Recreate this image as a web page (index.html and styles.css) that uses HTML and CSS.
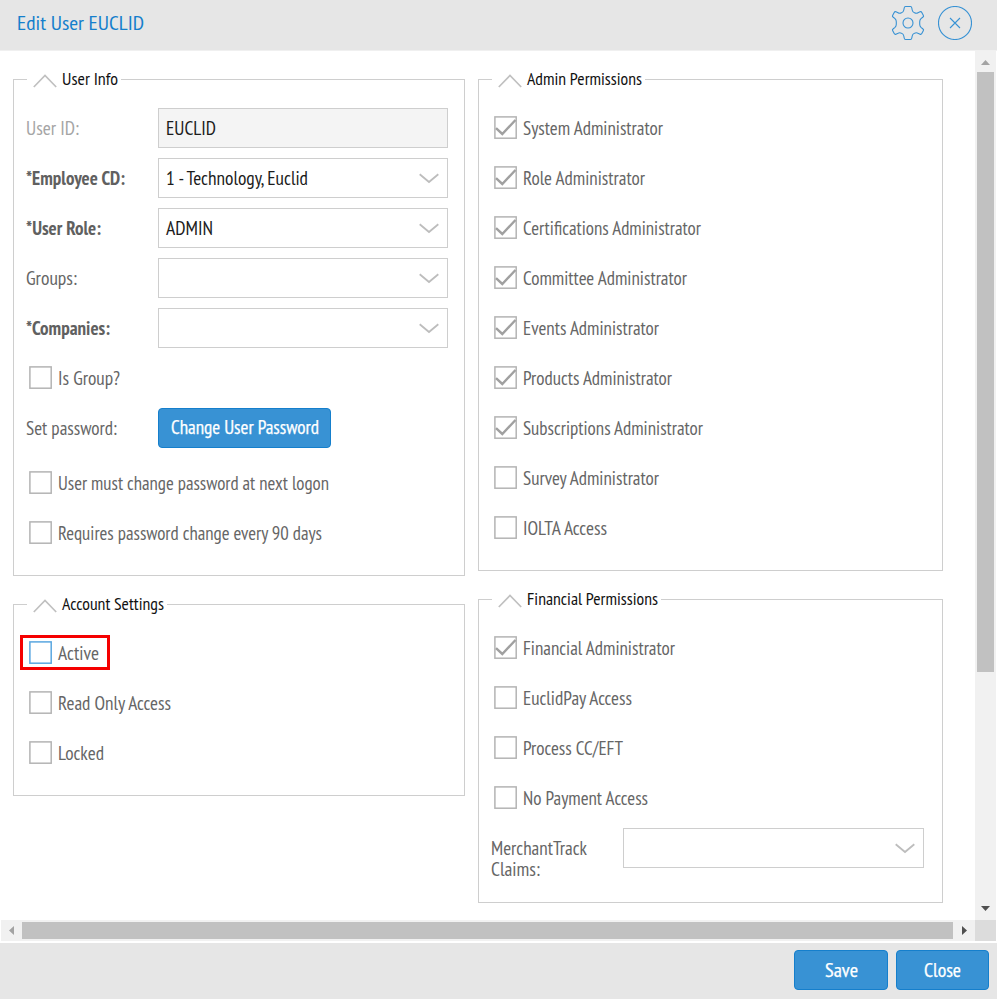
FILE: index.html
```
<!DOCTYPE html>
<html lang="en">
<head>
<meta charset="utf-8">
<title>Edit User EUCLID</title>
<link rel="stylesheet" href="styles.css">
</head>
<body>
<svg class="defs" width="0" height="0">
  <symbol id="box" viewBox="0 0 23 23"><rect x=".9" y=".9" width="21.3" height="21.3"/></symbol>
  <symbol id="checked" viewBox="0 0 23 23"><rect x=".9" y=".9" width="21.3" height="21.3"/><path class="tick" d="M2 12.2L8.3 18L21.5 4"/></symbol>
  <symbol id="up" viewBox="0 0 24 14"><path d="M.8 13L12 1.5L23.2 13"/></symbol>
  <symbol id="down" viewBox="0 0 20 11"><path d="M.7 1.3L10 9L19.3 1.3"/></symbol>
</svg>
<div class="dialog">
  <header class="titlebar">
    <svg class="t title" width="127" height="26"><text y="20" textLength="127" lengthAdjust="spacingAndGlyphs">Edit User EUCLID</text></svg>
    <svg class="tool" width="34" height="36" viewBox="-17 -18 34 36"><path d="M-2.5-16.5H2.5Q3.6-16.5 3.8-15L4.2-13Q4.5-11 6.5-10.3Q8.3-9.3 10-10.3L12-11.2Q13.2-11.7 13.8-10.6L15.4-7.6Q15.9-6.7 15-6L13-4.3Q11.7-3 11.7-1.2V1.2Q11.7 3 13 4.3L15 6Q15.9 6.7 15.4 7.6L13.8 10.6Q13.2 11.7 12 11.2L10 10.3Q8.3 9.3 6.5 10.3Q4.5 11 4.2 13L3.8 15Q3.6 16.5 2.5 16.5H-2.5Q-3.6 16.5-3.8 15L-4.2 13Q-4.5 11-6.5 10.3Q-8.3 9.3-10 10.3L-12 11.2Q-13.2 11.7-13.8 10.6L-15.4 7.6Q-15.9 6.7-15 6L-13 4.3Q-11.7 3-11.7 1.2V-1.2Q-11.7-3-13-4.3L-15-6Q-15.9-6.7-15.4-7.6L-13.8-10.6Q-13.2-11.7-12-11.2L-10-10.3Q-8.3-9.3-6.5-10.3Q-4.5-11-4.2-13L-3.8-15Q-3.6-16.5-2.5-16.5Z"/><circle r="5"/></svg>
    <svg class="tool" width="34" height="34" viewBox="-17 -17 34 34"><circle r="16.5"/><path d="M-5-5L5 5M5-5L-5 5"/></svg>
  </header>
  <div class="viewport">
    <main class="content">
      <div class="column left">
        <fieldset>
          <legend><svg class="chev" width="24" height="14"><use href="#up"/></svg><svg class="t legend" width="56" height="25"><text y="18" textLength="56" lengthAdjust="spacingAndGlyphs">User Info</text></svg></legend>
          <div class="row"><span class="label off"><svg class="t" width="53" height="24"><text y="19" textLength="53" lengthAdjust="spacingAndGlyphs">User ID:</text></svg></span><div class="input disabled"><svg class="t" width="50" height="24"><text y="19" textLength="50" lengthAdjust="spacingAndGlyphs">EUCLID</text></svg></div></div>
          <div class="row"><span class="label bold"><svg class="t" width="99" height="24"><text y="19" textLength="99" lengthAdjust="spacingAndGlyphs">*Employee CD:</text></svg></span><div class="input"><svg class="t" width="142" height="24"><text y="19" textLength="142" lengthAdjust="spacingAndGlyphs">1 - Technology, Euclid</text></svg><svg class="arrow" width="20" height="11"><use href="#down"/></svg></div></div>
          <div class="row"><span class="label bold"><svg class="t" width="75" height="24"><text y="19" textLength="75" lengthAdjust="spacingAndGlyphs">*User Role:</text></svg></span><div class="input"><svg class="t" width="47" height="24"><text y="19" textLength="47" lengthAdjust="spacingAndGlyphs">ADMIN</text></svg><svg class="arrow" width="20" height="11"><use href="#down"/></svg></div></div>
          <div class="row"><span class="label"><svg class="t" width="51" height="24"><text y="19" textLength="51" lengthAdjust="spacingAndGlyphs">Groups:</text></svg></span><div class="input"><svg class="arrow" width="20" height="11"><use href="#down"/></svg></div></div>
          <div class="row"><span class="label bold"><svg class="t" width="84" height="24"><text y="19" textLength="84" lengthAdjust="spacingAndGlyphs">*Companies:</text></svg></span><div class="input"><svg class="arrow" width="20" height="11"><use href="#down"/></svg></div></div>
          <div class="row check"><svg class="cb" width="23" height="23"><use href="#box"/></svg><svg class="t" width="62" height="24"><text y="19" textLength="62" lengthAdjust="spacingAndGlyphs">Is Group?</text></svg></div>
          <div class="row"><span class="label"><svg class="t" width="91" height="24"><text y="19" textLength="91" lengthAdjust="spacingAndGlyphs">Set password:</text></svg></span><button class="btn change"><svg class="t" width="148" height="24"><text y="18" textLength="148" lengthAdjust="spacingAndGlyphs">Change User Password</text></svg></button></div>
          <div class="row check spaced"><svg class="cb" width="23" height="23"><use href="#box"/></svg><svg class="t" width="271" height="24"><text y="19" textLength="271" lengthAdjust="spacingAndGlyphs">User must change password at next logon</text></svg></div>
          <div class="row check"><svg class="cb" width="23" height="23"><use href="#box"/></svg><svg class="t" width="264" height="24"><text y="19" textLength="264" lengthAdjust="spacingAndGlyphs">Requires password change every 90 days</text></svg></div>
        </fieldset>
        <fieldset>
          <legend><svg class="chev" width="24" height="14"><use href="#up"/></svg><svg class="t legend" width="102" height="25"><text y="18" textLength="102" lengthAdjust="spacingAndGlyphs">Account Settings</text></svg></legend>
          <div class="row check active"><svg class="cb" width="23" height="23"><use href="#box"/></svg><svg class="t" width="41" height="24"><text y="19" textLength="41" lengthAdjust="spacingAndGlyphs">Active</text></svg></div>
          <div class="row check"><svg class="cb" width="23" height="23"><use href="#box"/></svg><svg class="t" width="113" height="24"><text y="19" textLength="113" lengthAdjust="spacingAndGlyphs">Read Only Access</text></svg></div>
          <div class="row check"><svg class="cb" width="23" height="23"><use href="#box"/></svg><svg class="t" width="46" height="24"><text y="19" textLength="46" lengthAdjust="spacingAndGlyphs">Locked</text></svg></div>
        </fieldset>
      </div>
      <div class="column right">
        <fieldset>
          <legend><svg class="chev" width="24" height="14"><use href="#up"/></svg><svg class="t legend" width="115" height="25"><text y="18" textLength="115" lengthAdjust="spacingAndGlyphs">Admin Permissions</text></svg></legend>
          <div class="row check"><svg class="cb" width="23" height="23"><use href="#checked"/></svg><svg class="t" width="140" height="24"><text y="19" textLength="140" lengthAdjust="spacingAndGlyphs">System Administrator</text></svg></div>
          <div class="row check"><svg class="cb" width="23" height="23"><use href="#checked"/></svg><svg class="t" width="122" height="24"><text y="19" textLength="122" lengthAdjust="spacingAndGlyphs">Role Administrator</text></svg></div>
          <div class="row check"><svg class="cb" width="23" height="23"><use href="#checked"/></svg><svg class="t" width="178" height="24"><text y="19" textLength="178" lengthAdjust="spacingAndGlyphs">Certifications Administrator</text></svg></div>
          <div class="row check"><svg class="cb" width="23" height="23"><use href="#checked"/></svg><svg class="t" width="164" height="24"><text y="19" textLength="164" lengthAdjust="spacingAndGlyphs">Committee Administrator</text></svg></div>
          <div class="row check"><svg class="cb" width="23" height="23"><use href="#checked"/></svg><svg class="t" width="136" height="24"><text y="19" textLength="136" lengthAdjust="spacingAndGlyphs">Events Administrator</text></svg></div>
          <div class="row check"><svg class="cb" width="23" height="23"><use href="#checked"/></svg><svg class="t" width="149" height="24"><text y="19" textLength="149" lengthAdjust="spacingAndGlyphs">Products Administrator</text></svg></div>
          <div class="row check"><svg class="cb" width="23" height="23"><use href="#checked"/></svg><svg class="t" width="180" height="24"><text y="19" textLength="180" lengthAdjust="spacingAndGlyphs">Subscriptions Administrator</text></svg></div>
          <div class="row check"><svg class="cb" width="23" height="23"><use href="#box"/></svg><svg class="t" width="136" height="24"><text y="19" textLength="136" lengthAdjust="spacingAndGlyphs">Survey Administrator</text></svg></div>
          <div class="row check"><svg class="cb" width="23" height="23"><use href="#box"/></svg><svg class="t" width="84" height="24"><text y="19" textLength="84" lengthAdjust="spacingAndGlyphs">IOLTA Access</text></svg></div>
        </fieldset>
        <fieldset>
          <legend><svg class="chev" width="24" height="14"><use href="#up"/></svg><svg class="t legend" width="131" height="25"><text y="18" textLength="131" lengthAdjust="spacingAndGlyphs">Financial Permissions</text></svg></legend>
          <div class="row check"><svg class="cb" width="23" height="23"><use href="#checked"/></svg><svg class="t" width="152" height="24"><text y="19" textLength="152" lengthAdjust="spacingAndGlyphs">Financial Administrator</text></svg></div>
          <div class="row check"><svg class="cb" width="23" height="23"><use href="#box"/></svg><svg class="t" width="109" height="24"><text y="19" textLength="109" lengthAdjust="spacingAndGlyphs">EuclidPay Access</text></svg></div>
          <div class="row check"><svg class="cb" width="23" height="23"><use href="#box"/></svg><svg class="t" width="100" height="24"><text y="19" textLength="100" lengthAdjust="spacingAndGlyphs">Process CC/EFT</text></svg></div>
          <div class="row check"><svg class="cb" width="23" height="23"><use href="#box"/></svg><svg class="t" width="125" height="24"><text y="19" textLength="125" lengthAdjust="spacingAndGlyphs">No Payment Access</text></svg></div>
          <div class="row claims"><span class="label"><svg class="t" width="96" height="52"><text y="27" textLength="96" lengthAdjust="spacingAndGlyphs">MerchantTrack</text><text y="48" textLength="49" lengthAdjust="spacingAndGlyphs">Claims:</text></svg></span><div class="input"><svg class="arrow" width="20" height="11"><use href="#down"/></svg></div></div>
        </fieldset>
      </div>
    </main>
    <div class="vbar">
      <svg class="faded" width="9" height="5"><path d="M0 5L4.5 0L9 5Z"/></svg>
      <div class="thumb"></div>
      <svg class="last" width="9" height="5"><path d="M0 0H9L4.5 5Z"/></svg>
    </div>
    <div class="hbar">
      <svg class="faded" width="5" height="9"><path d="M5 0V9L0 4.5Z"/></svg>
      <div class="thumb"></div>
      <svg class="last" width="5" height="9"><path d="M0 0V9L5 4.5Z"/></svg>
    </div>
    <div class="corner"></div>
  </div>
  <footer class="actions">
    <button class="btn save"><svg class="t" width="33" height="24"><text y="19" textLength="33" lengthAdjust="spacingAndGlyphs">Save</text></svg></button>
    <button class="btn close"><svg class="t" width="37" height="24"><text y="19" textLength="37" lengthAdjust="spacingAndGlyphs">Close</text></svg></button>
  </footer>
</div>
</body>
</html>
```
FILE: styles.css
```
* { box-sizing: border-box; }
body { margin: 0; background: #fff; font-family: "PT Sans Narrow", Lato, "Open Sans", sans-serif; }
svg { display: block; flex: none; }
.defs { position: absolute; }
.dialog { width: 997px; height: 999px; display: flex; flex-direction: column; overflow: hidden; }

.t { overflow: visible; font-size: 18.5px; fill: #666; }
.t.title { font-size: 20px; fill: #157fcc; margin-right: auto; }
.t.legend { font-size: 17.2px; fill: #111; }

.titlebar { height: 51px; flex: none; display: flex; align-items: center; gap: 13px; padding: 0 25px 5px 17px; background: #e6e6e6; border-bottom: 1px solid #f0f0f0; }
.tool { fill: none; stroke: #3892d4; stroke-width: 1.1; }
.titlebar .tool:first-of-type { margin-left: auto; }

.viewport { height: 890px; flex: none; display: grid; grid-template-columns: 974px 21px; grid-template-rows: 869px 21px; padding-left: 1px; }
.content { display: flex; gap: 13px; padding: 16px 0 0 12px; }
.column { display: flex; flex-direction: column; gap: 16px; }
.left { width: 452px; }
.right { width: 465px; }
fieldset { margin: 0; min-width: 0; border: 1px solid #cecece; padding: 11px 13px 17px; }
legend { height: 25px; display: flex; align-items: center; gap: 5px; padding: 0 3px 0 6px; }
.chev { fill: none; stroke: #c0c0c0; stroke-width: 1.7; margin-top: 2px; }
.row { height: 50px; display: flex; align-items: center; }
.label { width: 131px; flex: none; }
.label .t { margin-left: -1px; }
.off .t { fill: #a5a5a5; }
.bold .t { font-weight: 700; fill: #606060; }
.input { width: 290px; height: 40px; display: flex; align-items: center; border: 1px solid #cecece; padding: 0 8px 0 7px; background: #fff; }
.input .t { fill: #1c1c1c; }
.input.disabled { background: #f4f4f4; }
.arrow { margin-left: auto; fill: none; stroke: #bdbdbd; stroke-width: 1.8; }
.check { gap: 6px; padding-left: 2px; }
.cb { fill: #fff; stroke: #b4b4b4; stroke-width: 1.5; margin-top: -1px; }
.tick { fill: none; stroke: #a0a0a0; stroke-width: 2.4; }
.spaced { margin-top: 5px; }
.active { width: 90px; height: 35px; margin: 7px 0 8px -7px; border: 3px solid #f50000; padding-left: 6px; }
.active .cb { stroke: #5aa7e0; }
.claims { height: 62px; align-items: flex-start; padding-top: 5px; }
.claims .input { width: 301px; }

.btn { height: 40px; display: flex; align-items: center; justify-content: center; border: 1px solid #157fcc; border-radius: 4px; background: #3892d4; padding: 0; font-family: inherit; }
.btn .t { fill: #fff; stroke: #fff; stroke-width: .25; }
.change { width: 173px; }
.save { width: 94px; }
.close { width: 93px; }

.vbar, .hbar { display: flex; align-items: center; background: #f1f1f1; fill: #505050; }
.vbar { flex-direction: column; padding: 9px 0; }
.hbar { padding: 0 8px; }
.faded { fill: #a3a3a3; }
.last { margin: auto 0 0; }
.hbar .last { margin: 0 0 0 auto; }
.thumb { background: #c1c1c1; }
.vbar .thumb { width: 17px; height: 600px; margin-top: 7px; }
.hbar .thumb { width: 931px; height: 17px; margin-left: 8px; }
.corner { background: #dcdcdc; }

.actions { flex: 1; display: flex; justify-content: flex-end; gap: 8px; padding: 7px 8px 0 0; margin-top: 2px; background: #e6e6e6; }
```
